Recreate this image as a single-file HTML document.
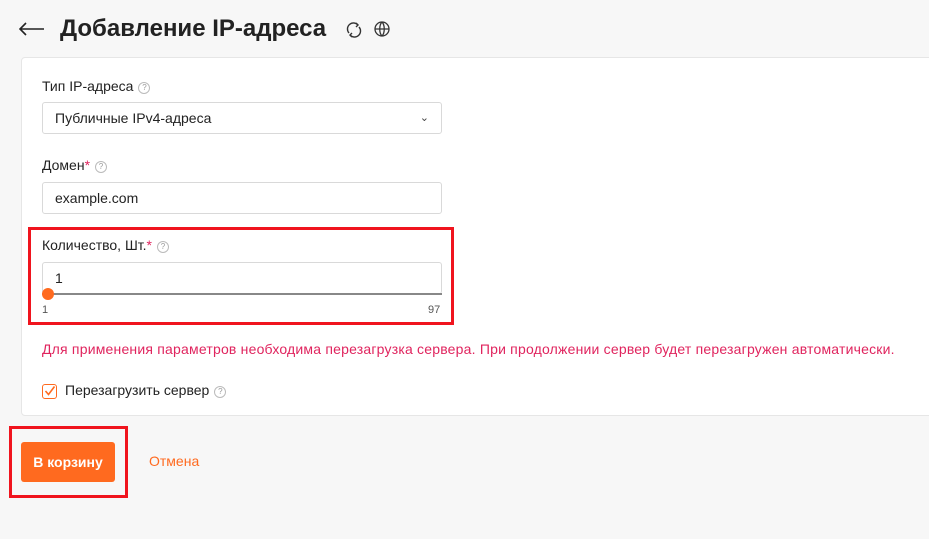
<!DOCTYPE html>
<html><head><meta charset="utf-8"><style>
*{box-sizing:border-box;margin:0;padding:0}
body{width:929px;height:539px;background:#f7f7f7;font-family:"Liberation Sans","DejaVu Sans",sans-serif;color:#222;position:relative;overflow:hidden}
.abs{position:absolute}
.card{left:21px;top:57px;width:920px;height:359px;background:#fff;border:1px solid #e6e6e6;border-radius:4px}
.lbl{font-size:14px;color:#222}
.q{display:inline-block;width:12px;height:12px;border:1px solid #bbb;border-radius:50%;font-size:8px;color:#999;text-align:center;line-height:10px;vertical-align:1px;margin-left:5px}
.inp{left:42px;width:400px;height:32px;border:1px solid #d9d9d9;border-radius:3px;font-size:14px;padding-left:12px;line-height:30px;background:#fff}
.star{color:#e0245e}
</style></head><body>
<svg class="abs" style="left:19px;top:22px" width="26" height="14" viewBox="0 0 26 14" fill="none" stroke="#222" stroke-width="1.6"><path d="M1 7h24M7 1L1 7l6 6"/></svg>
<div class="abs" style="left:60px;top:13px;font-size:24px;font-weight:bold;line-height:32px">Добавление IP-адреса</div>
<svg class="abs" style="left:345px;top:21px" width="18" height="18" viewBox="0 0 18 18" fill="none" stroke="#333" stroke-width="1.4"><path d="M4 12A6 6 0 0 1 13 4M14 6A6 6 0 0 1 5 14"/><path d="M11 2l2 2-2 2M7 16l-2-2 2-2"/></svg>
<svg class="abs" style="left:373px;top:20px" width="18" height="18" viewBox="0 0 18 18" fill="none" stroke="#333" stroke-width="1.3"><circle cx="9" cy="9" r="7"/><path d="M2 9h14M9 2c-3 3-3 11 0 14M9 2c3 3 3 11 0 14"/></svg>
<div class="abs card"></div>
<div class="abs lbl" style="left:42px;top:78px">Тип IP-адреса<span class="q">?</span></div>
<div class="abs inp" style="top:102px">Публичные IPv4-адреса<span style="position:absolute;right:12px;top:0;font-size:11px;color:#444">&#8964;</span></div>
<div class="abs lbl" style="left:42px;top:157px">Домен<span class="star">*</span><span class="q">?</span></div>
<div class="abs inp" style="top:182px">example.com</div>
<div class="abs" style="left:28px;top:227px;width:426px;height:98px;border:3px solid #f0141e"></div>
<div class="abs lbl" style="left:42px;top:237px">Количество, Шт.<span class="star">*</span><span class="q">?</span></div>
<div class="abs inp" style="top:262px;height:32px;border-bottom:none">1</div>
<div class="abs" style="left:42px;top:293px;width:400px;height:2px;background:#888"></div>
<div class="abs" style="left:42px;top:288px;width:12px;height:12px;border-radius:50%;background:#ff6a1f"></div>
<div class="abs" style="left:42px;top:304px;font-size:11px;color:#555">1</div>
<div class="abs" style="left:428px;top:304px;font-size:11px;color:#555">97</div>
<div class="abs" style="left:42px;top:341px;font-size:14px;letter-spacing:0.2px;color:#e0245e;white-space:nowrap">Для применения параметров необходима перезагрузка сервера. При продолжении сервер будет перезагружен автоматически.</div>
<div class="abs" style="left:42px;top:384px;width:15px;height:15px;border:1.5px solid #ff6a1f;border-radius:3px"></div>
<svg class="abs" style="left:44px;top:385px" width="12" height="12" viewBox="0 0 12 12"><path d="M1.5 6l3 3.5L10.5 1.5" fill="none" stroke="#ff6a1f" stroke-width="1.6"/></svg>
<div class="abs lbl" style="left:65px;top:382px">Перезагрузить сервер<span class="q">?</span></div>
<div class="abs" style="left:9px;top:426px;width:119px;height:72px;border:3px solid #f0141e"></div>
<div class="abs" style="left:21px;top:442px;width:94px;height:40px;background:#ff6a1f;border-radius:3px;color:#fff;font-weight:bold;font-size:14px;text-align:center;line-height:40px">В корзину</div>
<div class="abs" style="left:149px;top:453px;font-size:14px;color:#ff6a1f">Отмена</div>
</body></html>
